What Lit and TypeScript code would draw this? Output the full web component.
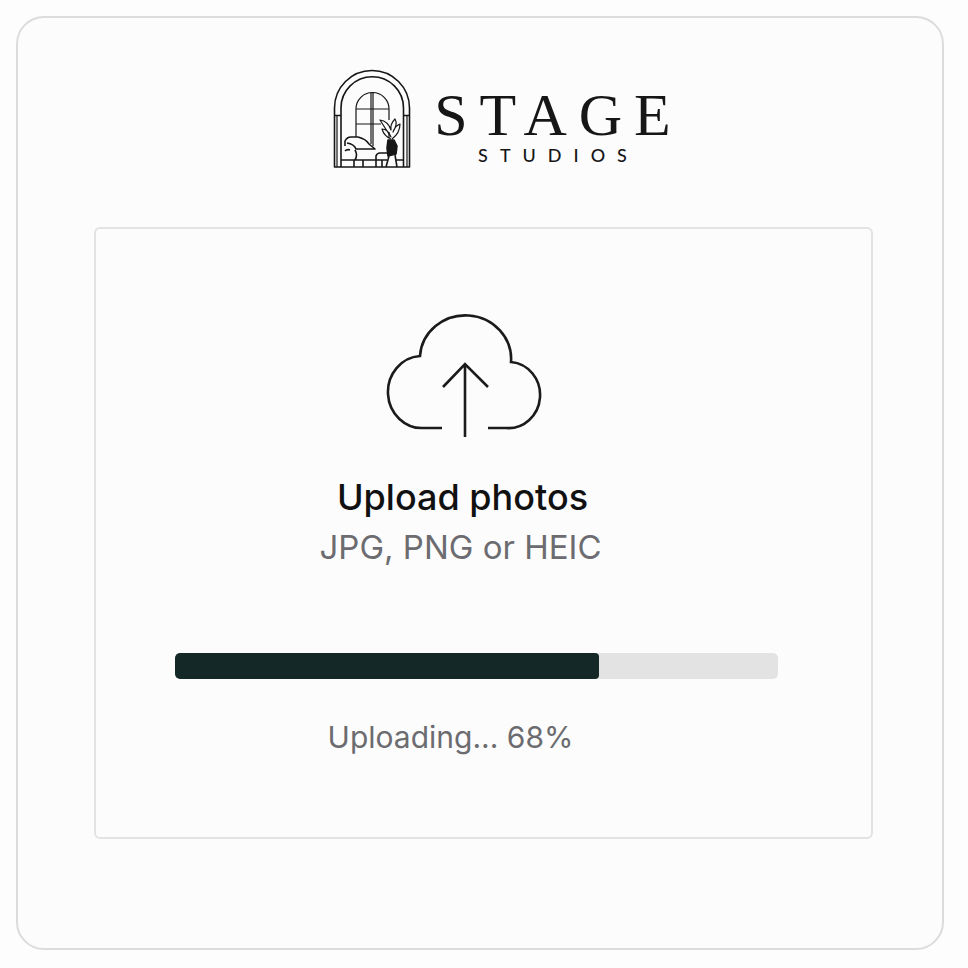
import { LitElement, html, css } from "lit";
import { customElement, property } from "lit/decorators.js";

@customElement("brand-logo")
class BrandLogo extends LitElement {
  static styles = css`
    :host { display: flex; align-items: flex-end; gap: 20px; color: #161616; }
    .mark { display: block; width: 84px; height: 104px; fill: none; stroke: currentColor; stroke-width: 1.6; stroke-linejoin: round; }
    .fine { stroke-width: 1.2; }
    .solid { fill: currentColor; }
    .words { display: flex; flex-direction: column; align-items: center; gap: 6px; padding-bottom: 5px; }
    .name { font: 400 60px/48px "Liberation Serif", serif; letter-spacing: 12px; margin-right: -12px; }
    .sub { font: 500 18px/20px Lato, sans-serif; letter-spacing: 12px; margin-right: -12px; }
  `;

  render() {
    return html`
      <svg class="mark" viewBox="330 66 84 104" aria-hidden="true">
        <path d="M334.500 167V108a37.500 37.500 0 0 1 75 0V167Z" />
        <path d="M341 167V108a31 31 0 0 1 62.500 0V167M334 115.500h7M403 115.500h7" />
        <path class="fine" d="M337 167V116M407 167V116" />
        <path class="fine" d="M356 137V109a16.500 16.500 0 0 1 33 0V120M371 93v51M373 93v53M356 109h33M356 124h25M389 132v6" />
        <path d="M345 146v-5q2-4 6-4h7q8 2 11 7l6 5h-19q-2-5-9-6M345 151q2-2 5-1M355 150q3 5 0 10M341 160h35M354 160v7M363 160v7" />
        <path d="M376 167v-11q1-3 4-3h8M376 160h11M396 160h8M382 160v7" />
        <path class="solid" d="M388 140h6l3 6-1 8-8 2-1-8Z" />
        <path d="M389 156l-3 11M395 155l2 12" />
        <path class="fine" d="M391 139q-7-3-9-10q6 0 9 8q-6-9-11-17q8 1 11 10q-1-6 4-11q3 5-2 13q2-6 7-8q0 9-8 15" />
      </svg>
      <div class="words">
        <span class="name">STAGE</span>
        <span class="sub">STUDIOS</span>
      </div>
    `;
  }
}

@customElement("upload-panel")
class UploadPanel extends LitElement {
  @property({ type: Number }) percent = 68;
  @property({ type: Number }) fill = 70.3;

  static styles = css`
    :host { display: block; box-sizing: border-box; border: 2px solid #e3e3e4; border-radius: 6px; padding: 80px 93px 74px 79px; }
    .intro { display: flex; flex-direction: column; align-items: center; padding-right: 28px; }
    .cloud { display: block; width: 160px; height: 132px; fill: none; stroke: #1b1b1b; stroke-width: 2.6; }
    h1 { margin: 32px 0 0; font: 500 36px/48px Inter, sans-serif; color: #111; }
    p { margin: 0; font: 400 30px/52px Inter, sans-serif; color: #6c6c70; }
    .formats { font-size: 33px; padding-right: 4px; }
    .track { height: 26px; margin-top: 80px; border-radius: 5px; background: #e3e3e3; overflow: hidden; }
    .bar { height: 100%; border-radius: 4px; background: #142827; }
    .status { margin-top: 32px; padding-right: 52px; text-align: center; }
  `;

  render() {
    return html`
      <div class="intro">
        <svg class="cloud" viewBox="383 309 160 132" aria-hidden="true">
          <path d="M442 428H424a34 36 0 0 1-4-72a45.500 43.500 0 0 1 91 6a31.500 33 0 0 1-5 66H488" />
          <path d="M465 437V364M443 387L465 364L488 387" />
        </svg>
        <h1>Upload photos</h1>
        <p class="formats">JPG, PNG or HEIC</p>
      </div>
      <div class="track" role="progressbar" aria-labelledby="status" aria-valuemin="0" aria-valuemax="100" aria-valuenow=${this.percent}>
        <div class="bar" style="width: ${this.fill}%"></div>
      </div>
      <p class="status" id="status">Uploading... ${this.percent}%</p>
    `;
  }
}

@customElement("app-root")
class AppRoot extends LitElement {
  static styles = css`
    :host { display: block; box-sizing: border-box; min-height: 100vh; padding: 16px 24px 18px 16px; background: #fdfdfd; }
    .card { box-sizing: border-box; border: 2px solid #dcdcdf; border-radius: 28px; padding: 48px 69px 109px 76px; background: #fcfcfc; }
    .brand { display: flex; justify-content: center; padding-left: 34px; margin-bottom: 57px; }
  `;

  render() {
    return html`
      <main class="card">
        <header class="brand"><brand-logo role="img" aria-label="Stage Studios"></brand-logo></header>
        <upload-panel></upload-panel>
      </main>
    `;
  }
}
